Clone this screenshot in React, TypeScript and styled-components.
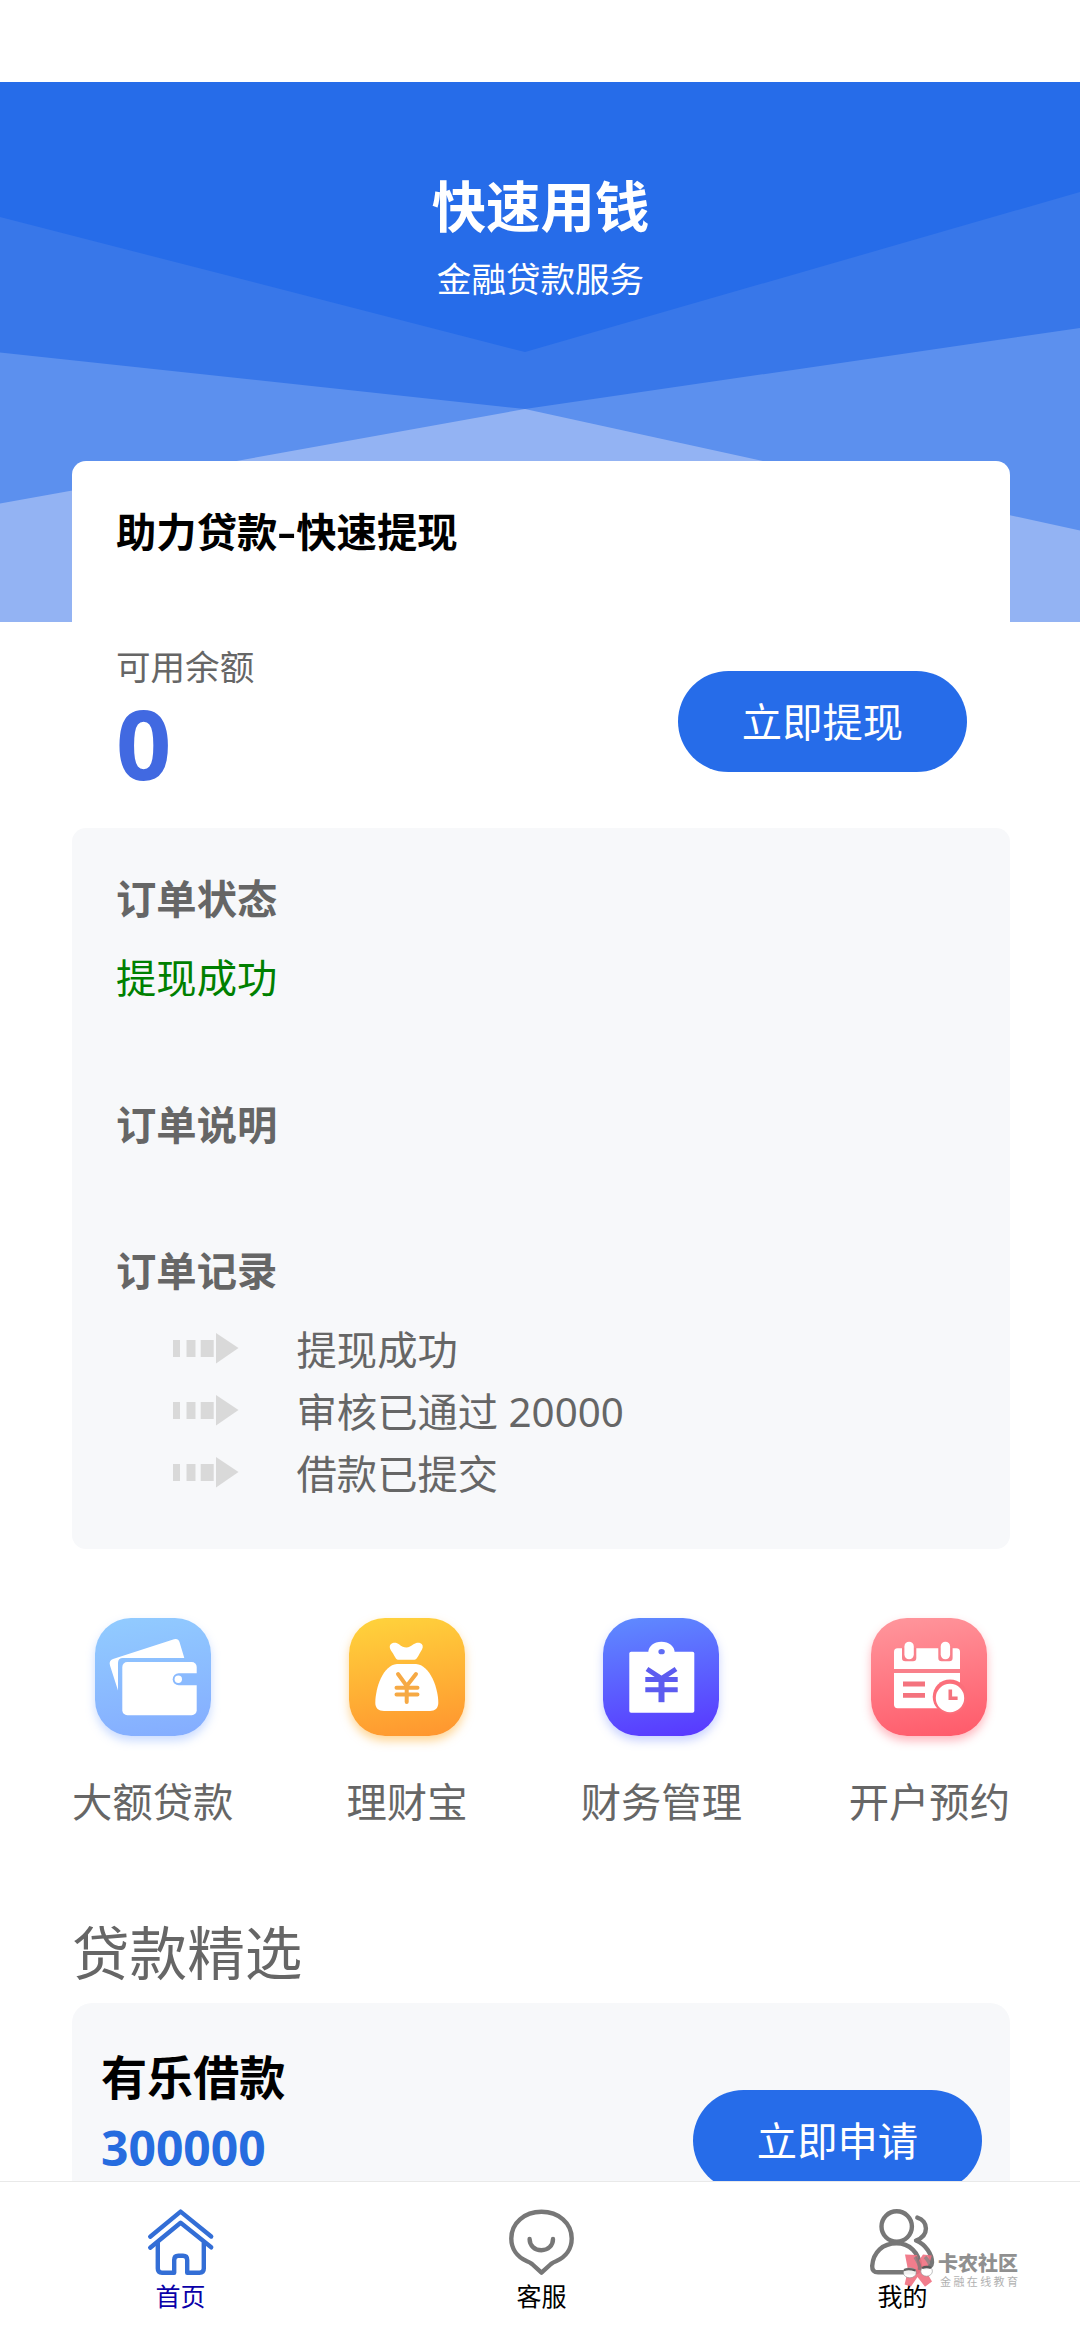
import React from "react";
import styled, { createGlobalStyle } from "styled-components";

const GlobalStyle = createGlobalStyle`
  * { box-sizing: border-box; }
  body {
    margin: 0;
    background: #fff;
    font-family: "Noto Sans", "Noto Sans CJK SC", sans-serif;
    color: #666;
  }
`;

const Screen = styled.div`
  position: relative;
  display: flex;
  flex-direction: column;
  width: 1080px;
  height: 2340px;
  overflow: hidden;
  background: #fff;
`;

const StatusSpace = styled.div`
  flex: none;
  height: 82px;
`;

const Content = styled.main`
  flex: 1;
  min-height: 0;
  overflow: hidden;
`;

const Hero = styled.header`
  position: relative;
  display: flex;
  flex-direction: column;
  align-items: center;
  height: 540px;
  margin-bottom: -161px;
  padding-top: 84px;
  padding-left: 1px;
  color: #fff;
`;

const HeroBackdrop = styled.svg`
  position: absolute;
  inset: 0;
  width: 100%;
  height: 100%;
`;

const HeroTitle = styled.h1`
  position: relative;
  margin: 0;
  font-size: 54.4px;
  line-height: 80px;
  font-weight: 700;
`;

const HeroSubtitle = styled.p`
  position: relative;
  margin: 9px 0 0;
  font-size: 34.56px;
  line-height: 48px;
`;

const Sheet = styled.section`
  position: relative;
  width: 938px;
  margin-left: 72px;
  padding-top: 41px;
  border-radius: 14px;
  background: #fff;
`;

const SheetTitle = styled.h2`
  margin: 0 0 82px;
  padding-left: 44px;
  color: #000;
  font-size: 40.32px;
  line-height: 60px;
  font-weight: 700;
`;

const Dash = styled.span`
  display: inline-block;
  width: 19px;
  text-align: center;
  font-weight: 600;
  transform: scaleX(1.45);
`;

const BalanceRow = styled.div`
  display: flex;
  align-items: center;
  justify-content: space-between;
  padding: 0 43px 0 44px;
`;

const BalanceLabel = styled.div`
  font-size: 34.56px;
  line-height: 46px;
`;

const BalanceValue = styled.div`
  padding-top: 2px;
  color: #4169e1;
  font-size: 97px;
  line-height: 100px;
  font-weight: 700;
`;

const PillButton = styled.button<{ $top: number }>`
  flex: none;
  width: 289px;
  height: 101px;
  margin: ${(p) => p.$top}px 0 0;
  padding: 0;
  border: 0;
  border-radius: 51px;
  background: #266ce9;
  color: #fff;
  font-family: inherit;
  font-size: 40.32px;
  line-height: 101px;
`;

const OrderPanel = styled.section`
  margin-top: 36px;
  padding: 43px 44px 44px;
  border-radius: 14px;
  background: #f7f8fa;
`;

const OrderTitle = styled.h3<{ $gap?: number }>`
  margin: ${(p) => p.$gap ?? 0}px 0 20px;
  font-size: 40.32px;
  line-height: 56px;
  font-weight: 700;
`;

const OrderStatus = styled.div`
  padding-top: 1px;
  color: #008000;
  font-size: 40.32px;
  line-height: 60px;
`;

const RecordRow = styled.div`
  display: flex;
  align-items: center;
  gap: 58px;
  height: 62px;
  padding-left: 56.5px;
  font-size: 40.32px;
  line-height: 62px;
`;

const ArrowSvg = styled.svg`
  flex: none;
  display: block;
  width: 66px;
  height: 32px;
  margin-top: -4px;
`;

const Services = styled.nav`
  display: flex;
  justify-content: space-between;
  margin-top: 69px;
`;

const Service = styled.div`
  display: flex;
  flex-direction: column;
  align-items: center;
  min-width: 134px;
`;

const Tile = styled.div<{ $from: string; $to: string; $glow: string }>`
  width: 116px;
  height: 118px;
  border-radius: 36px;
  background: linear-gradient(170deg, ${(p) => p.$from}, ${(p) => p.$to});
  box-shadow: 0 5px 10px ${(p) => p.$glow};
`;

const TileSvg = styled.svg`
  display: block;
  width: 116px;
  height: 118px;
`;

const ServiceLabel = styled.div`
  margin-top: 41px;
  font-size: 40.32px;
  line-height: 50px;
`;

const SectionTitle = styled.h2`
  margin: 86px 0 10px;
  font-size: 57.6px;
  line-height: 80px;
  font-weight: 400;
`;

const LoanCard = styled.article`
  display: flex;
  justify-content: space-between;
  height: 240px;
  padding: 45px 28px 0 29px;
  border-radius: 20px;
  background: #f7f8fa;
`;

const LoanName = styled.h3`
  margin: 0 0 10px;
  color: #000;
  font-size: 46.08px;
  line-height: 60px;
  font-weight: 700;
`;

const LoanAmount = styled.div`
  color: #266cdf;
  font-size: 48px;
  line-height: 60px;
  font-weight: 700;
`;

const TabBar = styled.footer`
  flex: none;
  display: grid;
  grid-template-columns: repeat(3, 361px);
  height: 159px;
  border-top: 1px solid #e9e9e9;
  background: #fff;
`;

const Tab = styled.div<{ $color: string }>`
  display: flex;
  flex-direction: column;
  align-items: center;
  padding-top: 27px;
  color: ${(p) => p.$color};
  font-size: 25px;
  line-height: 34px;
`;

const TabSvg = styled.svg<{ $stroke: string }>`
  display: block;
  width: 66px;
  height: 66px;
  margin-bottom: 4px;
  overflow: visible;
  fill: none;
  stroke: ${(p) => p.$stroke};
  stroke-width: 4.4;
  stroke-linecap: round;
  stroke-linejoin: round;
`;

const Watermark = styled.aside`
  position: absolute;
  left: 903px;
  top: 2253px;
  display: flex;
  gap: 5px;
  opacity: 0.9;
`;

const WatermarkSvg = styled.svg`
  display: block;
  width: 30px;
  height: 34px;
`;

const WatermarkName = styled.div`
  color: #858585;
  font-size: 20px;
  line-height: 22px;
  font-weight: 900;
`;

const WatermarkTag = styled.div`
  padding: 0 0 0 2px;
  color: #a9a9a9;
  font-size: 11px;
  line-height: 13px;
  letter-spacing: 2.4px;
`;

const Arrow = () => (
  <ArrowSvg viewBox="0 0 66 32" fill="#d9d9d9">
    <rect x="0" y="8" width="7" height="17" />
    <rect x="13.5" y="8" width="9" height="17" />
    <rect x="27.7" y="8" width="13" height="17" />
    <path d="M43 1 L65.5 16 L43 31.5Z" />
  </ArrowSvg>
);

const WalletIcon = () => (
  <TileSvg viewBox="0 0 116 118">
    <path
      fill="#fff"
      d="M23 72.5 L15 47.5 Q13.5 42.5 18 41 L79 21.3 Q83.3 20.3 84.5 24 L89.3 40 H28 Q23 40 23 45Z"
    />
    <rect x="27.3" y="44" width="74.4" height="53.3" rx="5" fill="#fff" />
    <path fill="#8abafe" d="M102 55.3 H83.7 a6 6 0 0 0 0 12 H102Z" />
    <circle cx="83.3" cy="61.3" r="3.7" fill="#fff" />
  </TileSvg>
);

const BagIcon = () => (
  <TileSvg viewBox="0 0 116 118">
    <path
      fill="#fff"
      d="M49 41.7 C46.5 41.7 46 38 43 34 C40.5 30.5 40 28 42 26 C44.5 24 48 24.6 50 26.3 C52.5 28.5 55 29.5 57.3 29.5 C60 29.5 62 28.3 64.5 26.3 C67 24.4 70.5 24 72.7 26 C74.5 28 74 30.5 71.5 34 C69 38 68 41.7 65.5 41.7Z"
    />
    <path
      fill="#fff"
      d="M48 46 H67 C81 47 89.3 70 89.3 85 C89.3 90 86 93 81 93 H35 C29.5 93 26.3 90 26.3 85 C26.3 70 34 47 48 46Z"
    />
    <path
      fill="none"
      stroke="#f6a944"
      strokeWidth="4"
      strokeLinecap="round"
      d="M49 56 L57.7 68 L67 56 M57.7 68 V84 M47.5 69.7 H68.5 M47.5 76.5 H68.5"
    />
  </TileSvg>
);

const ClipboardIcon = () => (
  <TileSvg viewBox="0 0 116 118">
    <rect x="26.3" y="33.7" width="65" height="61" rx="1.8" fill="#fff" />
    <path fill="#fff" d="M45.2 35 C45.2 28 51 23.7 58.4 23.7 S71.7 28 71.7 35Z" />
    <ellipse cx="58.6" cy="33.7" rx="3.2" ry="2.6" fill="#5f6cf5" />
    <path
      fill="none"
      stroke="#5d5cf0"
      strokeWidth="5"
      d="M44 51 L58.5 60.5 L73 51 M42.3 61.5 H74.7 M42.3 71.8 H74.7"
    />
    <path stroke="#5d5cf0" strokeWidth="6" d="M58.5 59 V84.2" />
  </TileSvg>
);

const CalendarIcon = () => (
  <TileSvg viewBox="0 0 116 118">
    <rect x="23" y="30.3" width="66" height="59.9" rx="3.6" fill="#fff" />
    <g fill="#f9808b">
      <path d="M31 30 H45.3 V40 Q45.3 43.3 42 43.3 H34.3 Q31 43.3 31 40Z" />
      <path d="M67.3 30 H81.6 V40 Q81.6 43.3 78.3 43.3 H70.6 Q67.3 43.3 67.3 40Z" />
      <rect x="23" y="51" width="66" height="4" />
      <circle cx="79" cy="78.8" r="17.3" fill="#fb6f7b" />
      <path d="M32 63.6 H54 V68.4 H32Z M32 75 H54 V79.8 H32Z" fill="#f4737e" />
    </g>
    <g fill="#fff">
      <rect x="33.4" y="23.7" width="9.4" height="17.6" rx="4.7" />
      <rect x="69.7" y="23.7" width="9.4" height="17.6" rx="4.7" />
      <circle cx="79" cy="80" r="14.2" />
    </g>
    <path fill="none" stroke="#f4737e" strokeWidth="3.6" d="M79.3 71.5 V80.3 H86.6" />
  </TileSvg>
);

const HomeIcon = () => (
  <TabSvg viewBox="0 0 66 66" $stroke="#336ed6">
    <path d="M2.2 27.7 L32.6 2.6 L63.2 27.5" />
    <path d="M2.2 38.7 L32.6 13.8 L63.2 38.3" />
    <path d="M9.8 34 V59.5 Q9.8 63.7 14 63.7 H26.2 V51 Q26.2 46.8 30.4 46.8 H35 Q39.2 46.8 39.2 51 V63.7 H51.5 Q55.8 63.7 55.8 59.5 V34" />
  </TabSvg>
);

const ServiceIcon = () => (
  <TabSvg viewBox="0 0 66 66" $stroke="#777">
    <path d="M32.5 63.7 L23 55 Q21 53.3 18 52.2 C8 48 2.3 39.5 2.3 29.5 C2.3 14 15.5 2.8 32.5 2.8 S62.7 14 62.7 29.5 C62.7 39.5 57 48 47 52.2 Q44 53.3 42 55 Z" />
    <path d="M20.6 30 C20.6 36.5 25.7 41.2 32.4 41.2 S44 36.5 44 30" />
  </TabSvg>
);

const ProfileIcon = () => (
  <TabSvg viewBox="0 0 66 66" $stroke="#777">
    <circle cx="26.7" cy="17.5" r="15.2" />
    <path d="M8 63.3 Q2 63.3 2.2 57 C3.2 43 13 34.3 26.5 34.3 C39.5 34.3 49 43.5 50 57 Q50 63.3 44.5 63.3 Z" />
    <path d="M47.3 8.6 C58.5 12 59.5 26.5 46 31.5 C56 35.5 62 45.5 62 53.5 Q61.8 58.8 54.5 58.8" />
  </TabSvg>
);

const WatermarkLogo = () => (
  <WatermarkSvg viewBox="0 0 30 34">
    <path
      fill="#f06f80"
      d="M2 1.5 L14 2 L15.5 8 L20 1.5 L28.8 2.5 L26 12 L22.5 17.5 L29 28.5 L22 33.8 L14.5 24 L8 33.5 L1.6 31.5 L5 17 Z"
    />
    <path
      fill="none"
      stroke="#777"
      strokeWidth="3.6"
      d="M12 4 Q17 11 17 17 M22 4 Q27 9 27 14"
      opacity="0.75"
    />
    <g fill="#fff" stroke="#888" strokeWidth="0.6">
      <ellipse cx="6.8" cy="19.8" rx="6.4" ry="5" />
      <ellipse cx="23.6" cy="18.2" rx="5.8" ry="5" />
    </g>
    <path
      fill="none"
      stroke="#555"
      strokeWidth="2.4"
      d="M1 17 Q6 15 12.5 17.5 M19 15 Q24 13 28 15"
    />
  </WatermarkSvg>
);

const services = [
  { label: "大额贷款", from: "#92ccff", to: "#84acff", glow: "rgba(132,172,255,.42)", icon: <WalletIcon /> },
  { label: "理财宝", from: "#ffd43c", to: "#ff942f", glow: "rgba(255,176,50,.5)", icon: <BagIcon /> },
  { label: "财务管理", from: "#5f8cff", to: "#5836ff", glow: "rgba(100,130,255,.35)", icon: <ClipboardIcon /> },
  { label: "开户预约", from: "#ff979d", to: "#ff5969", glow: "rgba(255,100,115,.45)", icon: <CalendarIcon /> },
];

const records = ["提现成功", "审核已通过 20000", "借款已提交"];

export default function App() {
  return (
    <Screen>
      <GlobalStyle />
      <StatusSpace />
      <Content>
        <Hero>
          <HeroBackdrop viewBox="0 0 1080 540" preserveAspectRatio="none">
            <rect width="1080" height="540" fill="#266ce9" />
            <path fill="#3877e9" d="M0 135 L525 270 L1080 110 V540 H0Z" />
            <path fill="#5c90ee" d="M0 270.5 L525 327 L1080 246 V540 H0Z" />
            <path fill="#93b3f3" d="M0 421.6 L525 327 L1080 448.6 V540 H0Z" />
          </HeroBackdrop>
          <HeroTitle>快速用钱</HeroTitle>
          <HeroSubtitle>金融贷款服务</HeroSubtitle>
        </Hero>

        <Sheet>
          <SheetTitle>
            助力贷款<Dash>-</Dash>快速提现
          </SheetTitle>
          <BalanceRow>
            <div>
              <BalanceLabel>可用余额</BalanceLabel>
              <BalanceValue>0</BalanceValue>
            </div>
            <PillButton $top={7}>立即提现</PillButton>
          </BalanceRow>

          <OrderPanel>
            <OrderTitle>订单状态</OrderTitle>
            <OrderStatus>提现成功</OrderStatus>
            <OrderTitle $gap={89}>订单说明</OrderTitle>
            <OrderTitle $gap={90}>订单记录</OrderTitle>
            {records.map((text) => (
              <RecordRow key={text}>
                <Arrow />
                <span>{text}</span>
              </RecordRow>
            ))}
          </OrderPanel>

          <Services>
            {services.map((s) => (
              <Service key={s.label}>
                <Tile $from={s.from} $to={s.to} $glow={s.glow}>
                  {s.icon}
                </Tile>
                <ServiceLabel>{s.label}</ServiceLabel>
              </Service>
            ))}
          </Services>

          <SectionTitle>贷款精选</SectionTitle>
          <LoanCard>
            <div>
              <LoanName>有乐借款</LoanName>
              <LoanAmount>300000</LoanAmount>
            </div>
            <PillButton $top={42}>立即申请</PillButton>
          </LoanCard>
        </Sheet>
      </Content>

      <TabBar>
        <Tab $color="#0a00a8">
          <HomeIcon />
          首页
        </Tab>
        <Tab $color="#000">
          <ServiceIcon />
          客服
        </Tab>
        <Tab $color="#000">
          <ProfileIcon />
          我的
        </Tab>
      </TabBar>

      <Watermark>
        <WatermarkLogo />
        <div>
          <WatermarkName>卡农社区</WatermarkName>
          <WatermarkTag>金融在线教育</WatermarkTag>
        </div>
      </Watermark>
    </Screen>
  );
}
